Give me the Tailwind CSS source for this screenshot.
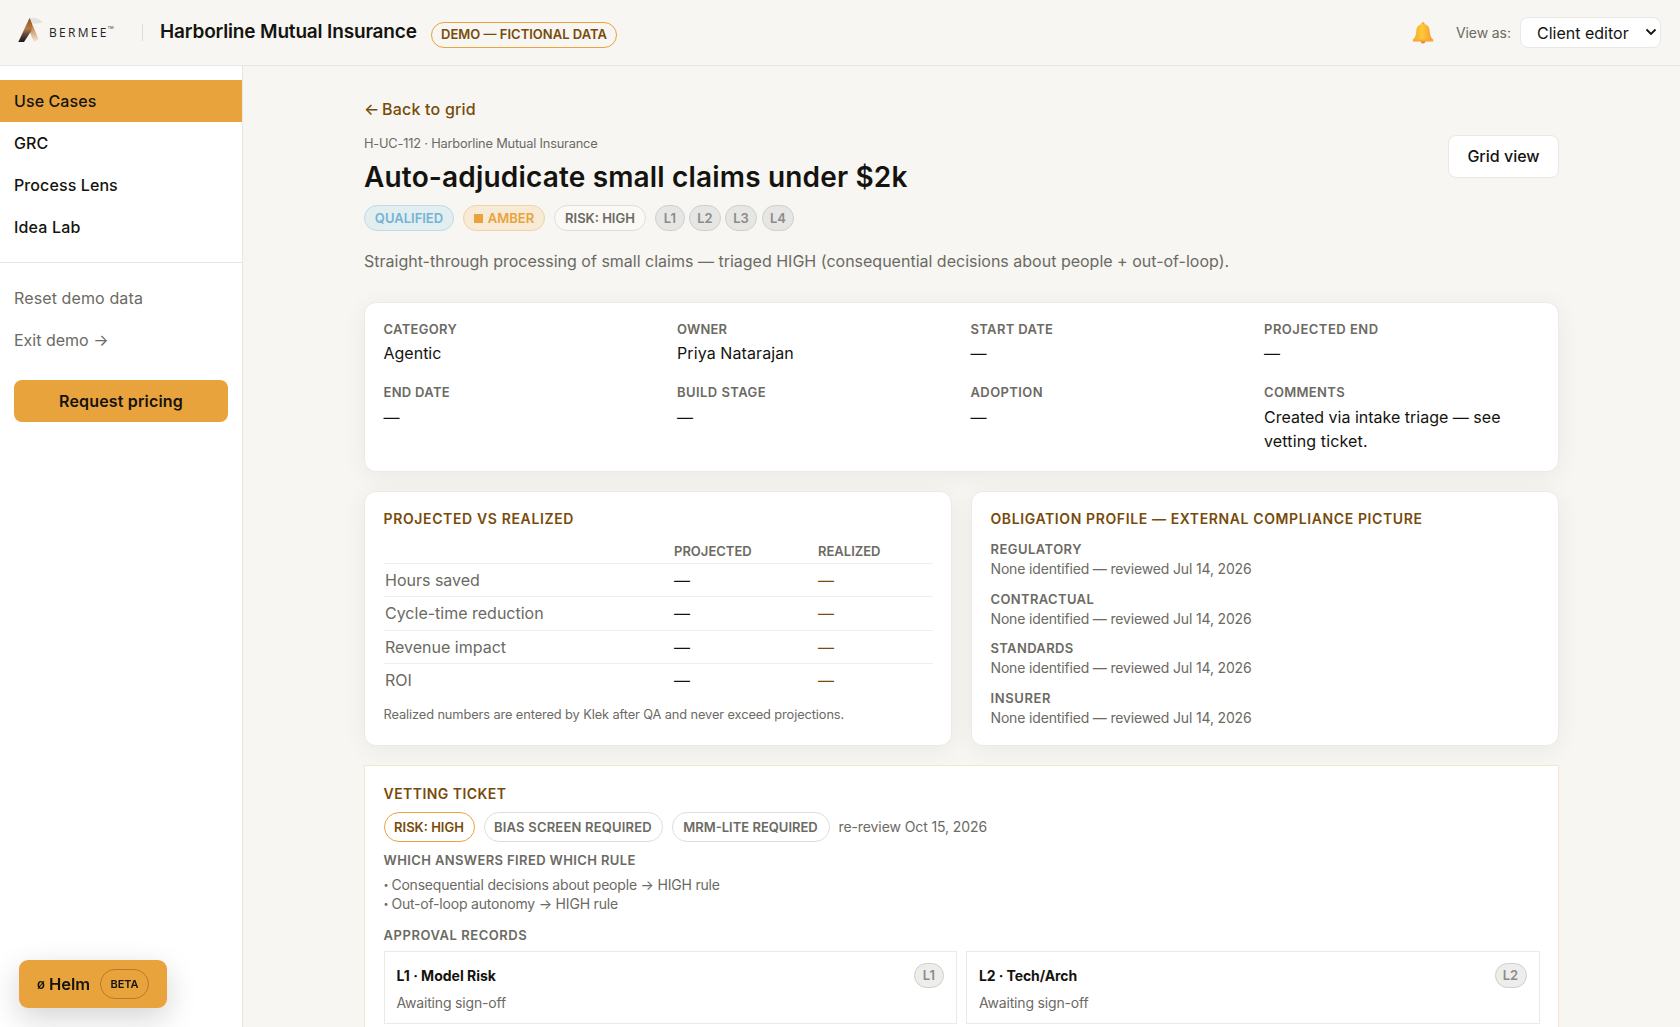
<!DOCTYPE html>
<html lang="en">
<head>
<meta charset="utf-8">
<title>Harborline Mutual Insurance</title>
<script src="https://cdn.jsdelivr.net/npm/@tailwindcss/browser@4"></script>
</head>
<body class="h-[1027px] overflow-hidden bg-[#f7f6f2] font-['Inter',sans-serif] text-[16px] text-[#14130f]">
<header class="flex h-[66px] items-center border-b border-[#e9e8e5] pl-[17px] pr-[19px]">
  <svg class="-mt-[7px] h-[28px] w-[26px] shrink-0" viewBox="0 0 26 28">
    <defs>
      <linearGradient id="a" x1="0" y1="0" x2="0" y2="1"><stop offset="0" stop-color="#8a5222"/><stop offset=".45" stop-color="#b87a42"/><stop offset=".7" stop-color="#5a4638"/><stop offset="1" stop-color="#15161a"/></linearGradient>
      <linearGradient id="b" x1="0" y1="0" x2="0" y2="1"><stop offset="0" stop-color="#8f5523"/><stop offset=".5" stop-color="#cf9a68"/><stop offset="1" stop-color="#f5eee4"/></linearGradient>
    </defs>
    <path d="M12.500 3C18 2 23 4 26 7.500L16 9Z" fill="#e6e3dc"/>
    <path d="M12.500 3 21.500 24 17 27.500 11.500 14Z" fill="url(#b)"/>
    <path d="M12.500 3 1.300 27H7L14.500 15.500 15 9Z" fill="url(#a)"/>
  </svg>
  <div class="ml-[6px] mt-[1px] flex w-[66px] items-start text-[12px] font-medium leading-[14px] tracking-[2.3px] text-[#232327] font-['Open_Sans',sans-serif]"><span>BERMEE</span><span class="-ml-px text-[4px] leading-[4px] tracking-normal">TM</span></div>
  <div class="ml-[27px] h-[17px] w-px bg-[#dddcd8]"></div>
  <h1 class="-mt-px ml-[17px] w-[271px] whitespace-nowrap text-[19px] font-semibold tracking-[-0.16px]">Harborline Mutual Insurance</h1>
  <div class="mt-[5px] flex h-[26px] w-[186px] items-center justify-center whitespace-nowrap rounded-full border border-[#e8a33d] text-[13px] font-semibold text-[#774b0b]">DEMO — FICTIONAL DATA</div>
  <svg class="ml-auto h-[22px] w-[22px]" viewBox="0 0 22 22">
    <defs><linearGradient id="g" x1="0" y1="0" x2="1" y2="0"><stop offset="0" stop-color="#f7a928"/><stop offset=".45" stop-color="#ffc83a"/><stop offset="1" stop-color="#f49a2c"/></linearGradient></defs>
    <circle cx="11" cy="19.200" r="2.300" fill="#e58a1f"/>
    <circle cx="11" cy="2" r="1.700" fill="#f3a52c"/>
    <path d="M11 2C6.500 2 4.500 5 4.300 9 4.100 13 3.200 15.500 1 17.500V19h20v-1.500c-2.200-2-3.100-4.500-3.300-8.500C17.500 5 15.500 2 11 2z" fill="url(#g)"/>
    <path d="M.8 17.600h20.400v2H.8z" fill="#f6a83a"/>
  </svg>
  <span class="ml-[22px] w-[64px] whitespace-nowrap text-[14px] tracking-[-0.1px] text-[#6b6a63]">View as:</span>
  <div class="flex h-[31px] w-[141px] items-center whitespace-nowrap rounded-[8px] border border-[#e9e8e4] bg-white pl-[16px] pt-px">Client editor
    <svg class="-mt-[2px] ml-auto mr-[3px] h-[8px] w-[12px]" viewBox="0 0 12 8" fill="none" stroke="#14130f" stroke-width="1.800"><path d="M1.500 1.500 6 6l4.500-4.500"/></svg>
  </div>
</header>
<div class="flex h-[961px]">
  <aside class="w-[243px] shrink-0 border-r border-[#e7e6e3] bg-white pt-[14px]">
    <nav class="flex flex-col whitespace-nowrap font-medium leading-[42px] tracking-[0.1px]">
      <a class="h-[42px] bg-[#e8a33d] pl-[14px]">Use Cases</a>
      <a class="h-[42px] pl-[14px]">GRC</a>
      <a class="h-[42px] pl-[14px]">Process Lens</a>
      <a class="h-[42px] pl-[14px] tracking-[0.17px]">Idea Lab</a>
    </nav>
    <div class="mt-[14px] border-t border-[#e7e6e3] pt-[14px] leading-[42px] text-[#6b6a63]">
      <div class="pl-[14px] tracking-[0.12px]">Reset demo data</div>
      <div class="pl-[14px]">Exit demo →</div>
    </div>
    <div class="ml-[14px] mt-[19px] h-[42px] w-[214px] rounded-[8px] bg-[#e8a33d] text-center font-semibold leading-[42px] tracking-[0.16px]">Request pricing</div>
  </aside>
  <main class="ml-[121px] w-[1195px] pt-[31px]">
    <div class="h-[24px] whitespace-nowrap font-medium leading-[24px] text-[#774b0b]"><span class="-mr-[1.5px]">←</span> <span class="tracking-[0.2px]">Back to grid</span></div>
    <div class="mt-[13px] flex items-start justify-between">
      <div>
        <div class="h-[19px] text-[12.8px] leading-[19px] tracking-[-0.19px] text-[#6b6a63]">H-UC-112 · Harborline Mutual Insurance</div>
        <h2 class="mt-[6px] h-[36px] whitespace-nowrap text-[28px] font-semibold leading-[36px] tracking-[0.17px]">Auto-adjudicate small claims under $2k</h2>
        <div class="mt-[10px] flex h-[26px] text-[13px] font-semibold leading-[24px] text-[#6b6a63]">
          <span class="w-[90px] rounded-full border border-[#bcdce6] bg-[#e3eef0] text-center text-[#74b3d4]">QUALIFIED</span>
          <span class="ml-[9px] flex w-[82px] items-center justify-center gap-[5px] rounded-full border border-[#f0d3a0] bg-[#f7ead6] text-[#e8a33d]"><i class="size-[9px] bg-[#e8a33d]"></i>AMBER</span>
          <span class="ml-[9px] w-[92px] rounded-full border border-[#dfded9] bg-[#faf9f6] text-center">RISK: HIGH</span>
          <span class="ml-[9px] w-[30px] rounded-full border border-[#cfcfcc] bg-[#e6e6e4] text-center text-[#8b8b89]">L1</span>
          <span class="ml-[4px] w-[32px] rounded-full border border-[#cfcfcc] bg-[#e6e6e4] text-center text-[#8b8b89]">L2</span>
          <span class="ml-[4px] w-[32px] rounded-full border border-[#cfcfcc] bg-[#e6e6e4] text-center text-[#8b8b89]">L3</span>
          <span class="ml-[5px] w-[32px] rounded-full border border-[#cfcfcc] bg-[#e6e6e4] text-center text-[#8b8b89]">L4</span>
        </div>
      </div>
      <div class="mt-[1px] h-[43px] w-[111px] rounded-[8px] border border-[#e9e8e4] bg-white text-center font-medium leading-[41px]">Grid view</div>
    </div>
    <p class="mt-[18px] h-[25px] whitespace-nowrap leading-[25px] text-[#6b6a63]">Straight-through processing of small claims — triaged HIGH (consequential decisions about people + out-of-loop).</p>

    <section class="mt-[28px] grid h-[170px] grid-cols-4 grid-rows-[63px_auto] gap-x-[20px] rounded-[12px] border border-[#ebeae7] bg-white pl-[18.5px] pr-[20.5px] pt-[16px] leading-[24px] shadow-[0_4px_24px_rgba(20,19,15,0.06)]">
      <div><div class="h-[22px] text-[13px] font-semibold leading-[20px] tracking-[0.3px] text-[#6b6a63]">CATEGORY</div>Agentic</div>
      <div><div class="h-[22px] text-[13px] font-semibold leading-[20px] tracking-[0.2px] text-[#6b6a63]">OWNER</div><span class="tracking-[0.1px]">Priya Natarajan</span></div>
      <div><div class="h-[22px] text-[13px] font-semibold leading-[20px] tracking-[0.35px] text-[#6b6a63]">START DATE</div>—</div>
      <div><div class="h-[22px] text-[13px] font-semibold leading-[20px] tracking-[0.5px] text-[#6b6a63]">PROJECTED END</div>—</div>
      <div><div class="h-[23px] text-[13px] font-semibold leading-[20px] tracking-[0.3px] text-[#6b6a63]">END DATE</div>—</div>
      <div><div class="h-[23px] text-[13px] font-semibold leading-[20px] tracking-[0.44px] text-[#6b6a63]">BUILD STAGE</div>—</div>
      <div><div class="h-[23px] text-[13px] font-semibold leading-[20px] tracking-[0.4px] text-[#6b6a63]">ADOPTION</div>—</div>
      <div><div class="h-[23px] text-[13px] font-semibold leading-[20px] tracking-[0.33px] text-[#6b6a63]">COMMENTS</div>Created via intake triage — see<br><span class="tracking-[0.14px]">vetting ticket.</span></div>
    </section>

    <div class="mt-[19px] grid h-[255px] grid-cols-2 gap-[19px]">
      <section class="rounded-[12px] border border-[#ebeae7] bg-white px-[18.5px] pt-[17px] shadow-[0_4px_24px_rgba(20,19,15,0.06)]">
        <h3 class="h-[20px] text-[14px] font-semibold leading-[20px] tracking-[0.63px] text-[#774b0b]">PROJECTED VS REALIZED</h3>
        <div class="mt-[11px] grid grid-cols-[290.5px_144px_auto] border-b border-[#efeeeb] pb-px text-[13px] font-semibold leading-[22px] text-[#6b6a63]"><span></span><span>PROJECTED</span><span>REALIZED</span></div>
        <div class="grid h-[33px] grid-cols-[1.5px_289px_144px_auto] border-b border-[#efeeeb] leading-[32px]"><i></i><span class="text-[#6b6a63]">Hours saved</span><span>—</span><span class="text-[#774b0b]">—</span></div>
        <div class="grid h-[34px] grid-cols-[1.5px_289px_144px_auto] border-b border-[#efeeeb] leading-[33px]"><i></i><span class="text-[#6b6a63]">Cycle-time reduction</span><span>—</span><span class="text-[#774b0b]">—</span></div>
        <div class="grid h-[33px] grid-cols-[1.5px_289px_144px_auto] border-b border-[#efeeeb] leading-[32px]"><i></i><span class="text-[#6b6a63]">Revenue impact</span><span>—</span><span class="text-[#774b0b]">—</span></div>
        <div class="grid h-[33px] grid-cols-[1.5px_289px_144px_auto] leading-[33px]"><i></i><span class="text-[#6b6a63]">ROI</span><span>—</span><span class="text-[#774b0b]">—</span></div>
        <p class="mt-[8px] whitespace-nowrap text-[12.8px] leading-[20px] tracking-[-0.1px] text-[#6b6a63]">Realized numbers are entered by Klek after QA and never exceed projections.</p>
      </section>
      <section class="rounded-[12px] border border-[#ebeae7] bg-white px-[18.5px] pt-[17px] text-[14px] leading-[20px] tracking-[-0.16px] text-[#6b6a63] shadow-[0_4px_24px_rgba(20,19,15,0.06)]">
        <h3 class="mb-[10px] h-[20px] font-semibold tracking-[0.61px] text-[#774b0b]">OBLIGATION PROFILE — EXTERNAL COMPLIANCE PICTURE</h3>
        <div class="h-[50px]"><div class="text-[13px] font-semibold tracking-[0.45px]">REGULATORY</div>None identified — reviewed Jul 14, 2026</div>
        <div class="h-[49px]"><div class="text-[13px] font-semibold tracking-[0.35px]">CONTRACTUAL</div>None identified — reviewed Jul 14, 2026</div>
        <div class="h-[50px]"><div class="text-[13px] font-semibold tracking-[0.35px]">STANDARDS</div>None identified — reviewed Jul 14, 2026</div>
        <div><div class="text-[13px] font-semibold tracking-[0.6px]">INSURER</div>None identified — reviewed Jul 14, 2026</div>
      </section>
    </div>

    <section class="mt-[19px] h-[262px] overflow-hidden border border-b-0 border-[#f6e6cc] bg-white px-[18.5px] pt-[18px] text-[14px] text-[#6b6a63]">
      <h3 class="h-[20px] font-semibold leading-[20px] tracking-[0.45px] text-[#774b0b]">VETTING TICKET</h3>
      <div class="mt-[8px] flex h-[30px] items-center whitespace-nowrap text-[13px] font-semibold leading-[28px]">
        <span class="w-[91px] rounded-full border border-[#e8a33d] text-center text-[#774b0b]">RISK: HIGH</span>
        <span class="ml-[9px] w-[179px] rounded-full border border-[#dfded9] text-center tracking-[0.2px]">BIAS SCREEN REQUIRED</span>
        <span class="ml-[9px] w-[158px] rounded-full border border-[#dfded9] text-center">MRM-LITE REQUIRED</span>
        <span class="ml-[9px] text-[14px] font-normal tracking-[-0.1px]">re-review Oct 15, 2026</span>
      </div>
      <div class="mt-[8px] text-[13px] font-semibold leading-[20px] tracking-[0.38px]">WHICH ANSWERS FIRED WHICH RULE</div>
      <div class="mt-[5px] flex h-[38px] flex-col leading-[19px] tracking-[-0.2px]">
        <div class="flex h-[19px] items-center gap-[3px]"><span class="text-[9px]">•</span><span>Consequential decisions about people → HIGH rule</span></div>
        <div class="flex h-[19px] items-center gap-[3px]"><span class="text-[9px]">•</span><span>Out-of-loop autonomy → HIGH rule</span></div>
      </div>
      <div class="mt-[12px] text-[13px] font-semibold leading-[20px] tracking-[0.55px]">APPROVAL RECORDS</div>
      <div class="mt-[6px] grid grid-cols-2 gap-[9px]">
        <div class="h-[73px] border border-[#ebeae7] px-[12px] pt-[11px]"><div class="flex h-[25px] items-center justify-between font-bold text-[#14130f]">L1 · Model Risk<span class="h-[25px] w-[30px] rounded-full border border-[#cfcfcc] bg-[#ededec] text-center text-[13px] font-semibold leading-[23px] text-[#8b8b89]">L1</span></div><div class="mt-[5px] leading-[20px] tracking-[-0.18px]">Awaiting sign-off</div></div>
        <div class="h-[73px] border border-[#ebeae7] px-[12px] pt-[11px]"><div class="flex h-[25px] items-center justify-between font-bold text-[#14130f]"><span class="tracking-[-0.1px]">L2 · Tech/Arch</span><span class="h-[25px] w-[32px] rounded-full border border-[#cfcfcc] bg-[#ededec] text-center text-[13px] font-semibold leading-[23px] text-[#8b8b89]">L2</span></div><div class="mt-[5px] leading-[20px] tracking-[-0.18px]">Awaiting sign-off</div></div>
      </div>
    </section>
  </main>
</div>
<div class="fixed left-[19px] top-[960px] flex h-[48px] w-[148px] items-center rounded-[9px] bg-[#e8a33d] pl-[18px] font-semibold shadow-[0_10px_30px_rgba(20,19,15,0.18)]"><span class="flex w-[63px] items-center gap-[4px] whitespace-nowrap"><span class="pt-[2px] text-[13px]">ø</span><span class="text-[16.5px]">Helm</span></span><span class="h-[30px] w-[49px] rounded-full border border-[#b57c28] text-center text-[11px] leading-[28px]">BETA</span></div>
</body>
</html>
